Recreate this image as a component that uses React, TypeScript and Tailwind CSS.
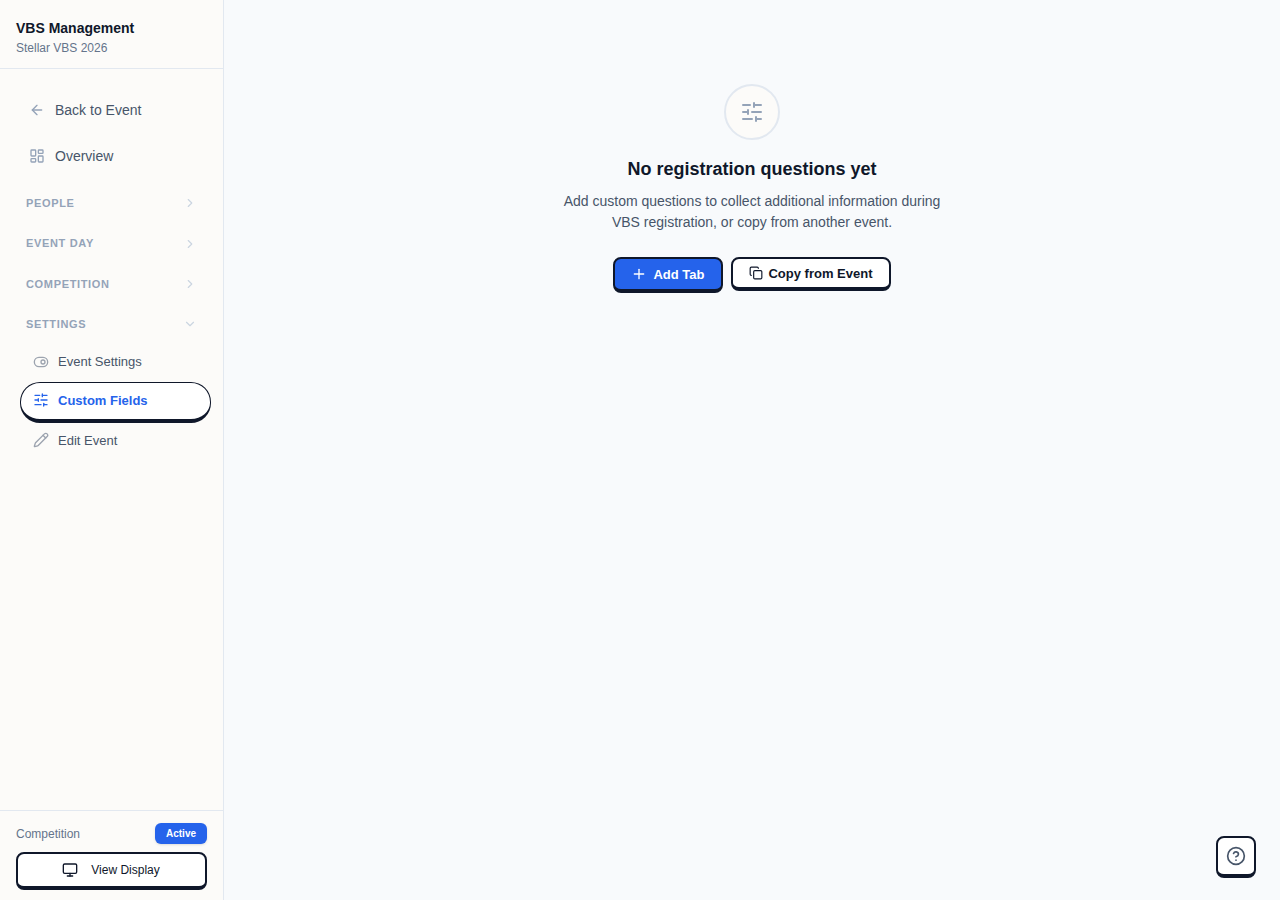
import { ArrowLeft, LayoutDashboard, ChevronRight, ChevronDown, ToggleRight, SlidersHorizontal, Pencil, Monitor, Plus, Copy, CircleHelp } from "lucide-react";

function Section({ label, open }: { label: string; open?: boolean }) {
  const Icon = open ? ChevronDown : ChevronRight;
  return (
    <div className="flex h-[20px] items-center justify-between pl-[10px] pr-[10px] text-[11px] font-semibold leading-none tracking-[0.66px] text-[#94a3b8]">
      <span>{label}</span>
      <Icon className="h-[14px] w-[14px] text-[#cbd5e1]" strokeWidth={2} />
    </div>
  );
}

export default function App() {
  return (
    <div className="flex h-[900px] w-[1280px] overflow-hidden bg-[#f8fafc] font-['Liberation_Sans',Arial,sans-serif]">
      <aside className="flex h-full w-[224px] shrink-0 flex-col border-r border-[#e2e8f0] bg-[#fcfbf9]">
        <div className="h-[69px] border-b border-[#e2e8f0] px-4 pt-[19px]">
          <div className="text-[14px] font-bold leading-[18px] text-[#0f172a]">VBS Management</div>
          <div className="mt-[3px] text-[12px] leading-[16px] text-[#64748b]">Stellar VBS 2026</div>
        </div>
        <nav className="flex flex-1 flex-col px-4 pt-[18px]">
          <div className="flex h-[46px] items-center gap-[10px] pl-[13px] text-[14px] text-[#475569]">
            <ArrowLeft className="h-[16px] w-[16px] text-[#94a3b8]" />
            <span>Back to Event</span>
          </div>
          <div className="flex h-[46px] items-center gap-[10px] pl-[13px] text-[14px] text-[#475569]">
            <LayoutDashboard className="h-[16px] w-[16px] text-[#94a3b8]" />
            <span>Overview</span>
          </div>
          <div className="mt-[14.3px] flex flex-col gap-[20.4px]">
            <Section label="PEOPLE" />
            <Section label="EVENT DAY" />
            <Section label="COMPETITION" />
            <Section label="SETTINGS" open />
          </div>
          <div className="mt-[8px] flex flex-col text-[13px]">
            <div className="flex h-[39px] items-center gap-[9px] pl-[17px] text-[#475569]">
              <ToggleRight className="h-[16px] w-[16px] text-[#9ca3af]" />
              <span>Event Settings</span>
            </div>
            <div className="ml-[4px] -mr-[4px] mt-[1px] flex h-[41px] items-center gap-[9px] rounded-[20px] border border-b-[4px] border-[#0f172a] bg-white pb-[2px] pl-[12px] font-bold text-[#2563eb]">
              <SlidersHorizontal className="h-[16px] w-[16px]" />
              <span>Custom Fields</span>
            </div>
            <div className="flex h-[34px] items-center gap-[9px] pl-[17px] text-[#475569]">
              <Pencil className="h-[16px] w-[16px] text-[#9ca3af]" />
              <span>Edit Event</span>
            </div>
          </div>
        </nav>
        <div className="h-[90px] border-t border-[#e2e8f0] px-4 pt-[12px]">
          <div className="flex h-[21px] items-center justify-between">
            <span className="text-[12px] text-[#64748b]">Competition</span>
            <span className="flex h-[21px] w-[52px] items-center justify-center rounded-[6px] bg-[#2563eb] text-[10px] font-bold text-white shadow-sm">Active</span>
          </div>
          <div className="mt-[8px] flex h-[38px] items-center justify-center gap-[13px] rounded-[8px] border-2 border-b-[4px] border-[#0f172a] bg-white pr-[1px] text-[12px] text-[#0f172a]">
            <Monitor className="h-[16px] w-[16px]" />
            <span>View Display</span>
          </div>
        </div>
      </aside>
      <main className="relative flex flex-1 flex-col items-center pt-[84px]">
        <div className="flex h-[56px] w-[56px] items-center justify-center rounded-full border-2 border-[#e2e8f0] bg-[#fcfbf9]">
          <SlidersHorizontal className="h-[24px] w-[24px] text-[#94a3b8]" strokeWidth={2} />
        </div>
        <h2 className="mt-[16px] text-[18px] font-bold leading-[26px] text-[#0f172a]">No registration questions yet</h2>
        <p className="mt-[9px] w-[400px] text-center text-[14px] leading-[21px] text-[#475569]">
          Add custom questions to collect additional information during VBS registration, or copy from another event.
        </p>
        <div className="mt-[24px] flex items-start gap-[8px]">
          <div className="flex h-[36px] w-[110px] items-center justify-center gap-[6px] rounded-[8px] border-2 border-b-[4px] border-[#0f172a] bg-[#2563eb] text-[13px] font-bold text-white">
            <Plus className="h-[16px] w-[16px]" />
            <span className="mt-[2px]">Add Tab</span>
          </div>
          <div className="flex h-[34px] w-[160px] items-center justify-center gap-[5px] rounded-[8px] border-2 border-b-[4px] border-[#0f172a] bg-white text-[13px] font-bold text-[#0f172a]">
            <Copy className="h-[14px] w-[14px]" />
            <span className="mt-[2px]">Copy from Event</span>
          </div>
        </div>
        <div className="absolute bottom-[22px] right-[24px] flex h-[42px] w-[40px] items-center justify-center rounded-[8px] border-2 border-b-[4px] border-[#0f172a] bg-white">
          <CircleHelp className="h-[20px] w-[20px] text-[#475569]" />
        </div>
      </main>
    </div>
  );
}
